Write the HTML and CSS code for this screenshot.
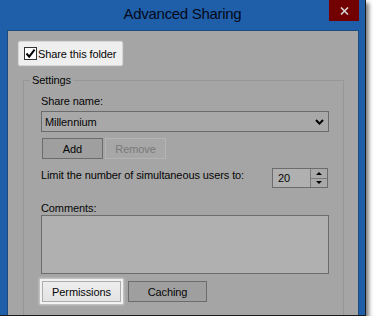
FILE: index.html
```html
<!DOCTYPE html>
<html>
<head>
<meta charset="utf-8">
<link rel="stylesheet" href="styles.css">
</head>
<body>
<div class="frame">
  <div class="titlebar">
    <div class="title">Advanced Sharing</div>
    <div class="close"><svg width="9" height="8" viewBox="0 0 9 8"><path d="M1 0.5 L8 7.5 M8 0.5 L1 7.5" stroke="#d4d4d4" stroke-width="1.6" fill="none"/></svg></div>
  </div>
  <div class="content">
    <div class="share-check">
      <span class="cb"><svg width="11" height="11" viewBox="0 0 11 11"><path d="M1.5 5.5 L4.2 8.6 L9.6 1.6" stroke="#000" stroke-width="2" fill="none"/></svg></span>
      <span>Share this folder</span>
    </div>
    <div class="group">
      <div class="group-title">Settings</div>
      <div class="lbl share-lbl">Share name:</div>
      <div class="combo"><span>Millennium</span><svg width="9" height="6" viewBox="0 0 9 6"><path d="M1 1 L4.5 4.6 L8 1" stroke="#000" stroke-width="2" fill="none"/></svg></div>
      <div class="btn-row">
        <div class="btn">Add</div>
        <div class="btn disabled">Remove</div>
      </div>
      <div class="limit-row">
        <span class="limit-text">Limit the number of simultaneous users to:</span>
        <div class="spin">
          <span class="spin-val">20</span>
          <div class="spin-btns">
            <div class="spin-up"><span class="tri-up"></span></div>
            <div class="spin-down"><span class="tri-down"></span></div>
          </div>
        </div>
      </div>
      <div class="lbl comments-lbl">Comments:</div>
      <div class="textarea"></div>
      <div class="btn-row bottom-row">
        <div class="btn wide highlight">Permissions</div>
        <div class="btn wide">Caching</div>
      </div>
    </div>
  </div>
</div>
</body>
</html>
```
FILE: styles.css
```css
* { box-sizing: border-box; }
html, body { margin: 0; background: #fff; }
body {
  font-family: "Liberation Sans", Arial, sans-serif;
  font-size: 11px;
  letter-spacing: -0.1px;
  color: #060606;
}
.frame {
  width: 366px;
  height: 316px;
  background: #1f5fa9;
  border-right: 1px solid #1a1a1a;
  border-bottom: 1px solid #1a1a1a;
  box-shadow: 3px 3px 4px rgba(0,0,0,0.5);
  overflow: hidden;
  display: flex;
  flex-direction: column;
}
.titlebar {
  flex: none;
  height: 30px;
  display: grid;
  grid-template-columns: 1fr auto 1fr;
  align-items: start;
}
.title {
  grid-column: 2;
  font-size: 15px;
  letter-spacing: -0.3px;
  line-height: 28px;
  color: #050818;
}
.close {
  grid-column: 3;
  justify-self: end;
  margin-right: 6px;
  width: 30px;
  height: 21px;
  background: #720000;
  display: flex;
  align-items: center;
  justify-content: center;
}
.content {
  flex: 1;
  margin: 0 6px 0 7px;
  background: #a5a5a5;
  border: 1px solid #1b4a80;
  border-bottom: none;
  padding: 11px 0 0 11px;
  overflow: hidden;
}
.share-check {
  display: flex;
  align-items: center;
  gap: 1px;
  width: 103px;
  height: 23px;
  padding-left: 5px;
  background: #efefef;
  border-radius: 1px;
  box-shadow: 0 0 1px 1px rgba(255,255,255,0.6);
}
.cb {
  width: 13px;
  height: 13px;
  background: #fff;
  border: 1px solid #333;
  display: flex;
  align-items: center;
  justify-content: center;
}
.group {
  margin: 15px 0 0 4px;
  width: 321px;
  height: 280px;
  border: 1px solid #979797;
  padding-left: 17px;
}
.group-title {
  width: max-content;
  margin: -8px 0 0 -11px;
  padding: 0 2px;
  line-height: 14px;
  background: #a5a5a5;
}
.lbl { line-height: 14px; }
.share-lbl { margin-top: 7px; }
.combo {
  margin-top: 3px;
  width: 288px;
  height: 21px;
  border: 1px solid #6b6b6b;
  background: #a8a8a8;
  display: flex;
  align-items: center;
  justify-content: space-between;
  padding: 0 4px 0 3px;
}
.btn-row {
  display: flex;
  gap: 2px;
  margin: 6px 0 0 1px;
}
.btn {
  width: 61px;
  height: 21px;
  border: 1px solid #6c6c6c;
  background: #9f9f9f;
  display: flex;
  align-items: center;
  justify-content: center;
}
.btn.disabled {
  border-color: #b4b4b4;
  background: #a7a7a7;
  color: #7a7a7a;
}
.btn.wide { width: 79px; }
.bottom-row { margin-top: 7px; gap: 7px; }
.btn.highlight {
  background: linear-gradient(#eeeeee, #e3e3e3);
  border-color: #adadad;
  box-shadow: 0 0 0 2px #f2f2f2, 0 0 2px 3px rgba(255,255,255,0.45);
}
.limit-row {
  margin-top: 9px;
  width: 288px;
  display: flex;
  justify-content: space-between;
  align-items: flex-start;
}
.limit-text { line-height: 14px; }
.spin {
  width: 56px;
  height: 20px;
  margin-right: 1px;
  border: 1px solid #6c6c6c;
  background: #b0b0b0;
  display: flex;
}
.spin-val {
  flex: 1;
  padding-left: 5px;
  line-height: 19px;
}
.spin-btns {
  width: 17px;
  border-left: 1px solid #7a7a7a;
  display: flex;
  flex-direction: column;
  background: #a9a9a9;
}
.spin-up, .spin-down {
  flex: 1;
  display: flex;
  align-items: center;
  justify-content: center;
}
.spin-down { border-top: 1px solid #7a7a7a; }
.tri-up {
  width: 0; height: 0;
  border-left: 3px solid transparent;
  border-right: 3px solid transparent;
  border-bottom: 3px solid #000;
}
.tri-down {
  width: 0; height: 0;
  border-left: 3px solid transparent;
  border-right: 3px solid transparent;
  border-top: 3px solid #000;
}
.comments-lbl { margin-top: 14px; line-height: 13px; }
.textarea {
  width: 288px;
  height: 59px;
  border: 1px solid #6c6c6c;
  background: #b0b0b0;
}
```
